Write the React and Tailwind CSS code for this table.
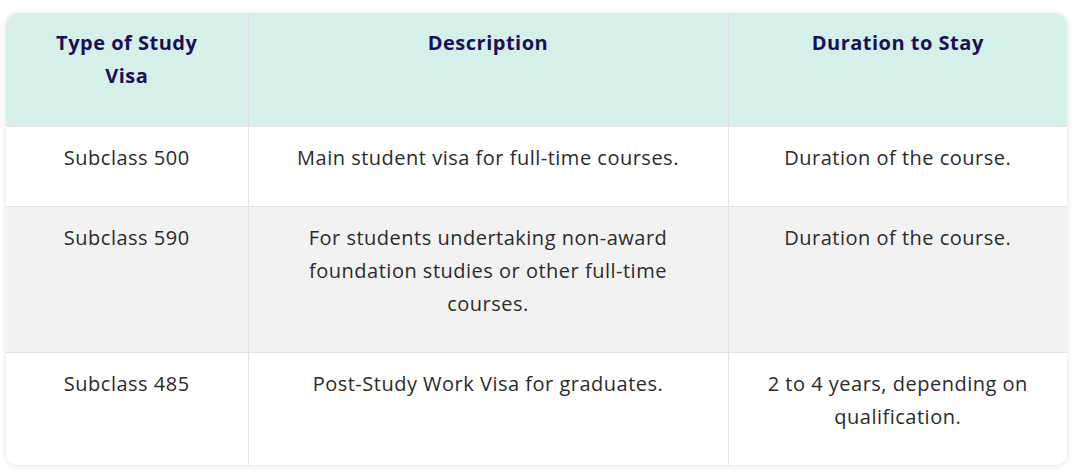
import React from "react";

const rows = [
    { type: "Subclass 500", desc: "Main student visa for full-time courses.", stay: "Duration of the course." },
    { type: "Subclass 590", desc: "For students undertaking non-award foundation studies or other full-time courses.", stay: "Duration of the course." },
    { type: "Subclass 485", desc: "Post-Study Work Visa for graduates.", stay: "2 to 4 years, depending on qualification." },
];

const App = () => {
    return (
        <div className="bg-white w-[1080px] h-[474px] pl-[6px] pt-[13px]" style={{ fontFamily: "'Open Sans', 'Noto Sans', sans-serif" }}>
            <div className="w-[1061px] rounded-xl overflow-hidden shadow-[0_1px_6px_rgba(0,0,0,0.12)]">
                <table className="w-full border-collapse table-fixed text-[20px] tracking-[0.5px] leading-[33px] text-center">
                    <colgroup>
                        <col className="w-[242px]" />
                        <col className="w-[480px]" />
                        <col className="w-[339px]" />
                    </colgroup>
                    <thead>
                        <tr className="bg-[#d4f0e9] text-[#1b0f5a] font-bold align-top">
                            <th className="px-[36px] pt-[13px] pb-[34px]">Type of Study Visa</th>
                            <th className="px-[36px] pt-[13px] pb-[34px] border-l border-[#dcdde3]">Description</th>
                            <th className="px-[36px] pt-[13px] pb-[34px] border-l border-[#dcdde3]">Duration to Stay</th>
                        </tr>
                    </thead>
                    <tbody className="text-[#2b2b2b]">
                        {rows.map((r, i) => (
                            <tr key={r.type} className={`align-top border-t border-[#e4e4e8] ${i === 1 ? "bg-[#f2f2f2]" : "bg-white"}`}>
                                <td className="px-[32px] pt-[14px] pb-[32px]">{r.type}</td>
                                <td className="px-[40px] pt-[14px] pb-[32px] border-l border-[#e4e4e8]">{r.desc}</td>
                                <td className="px-[30px] pt-[14px] pb-[32px] border-l border-[#e4e4e8]">{r.stay}</td>
                            </tr>
                        ))}
                    </tbody>
                </table>
            </div>
        </div>
    );
};

export default App;
